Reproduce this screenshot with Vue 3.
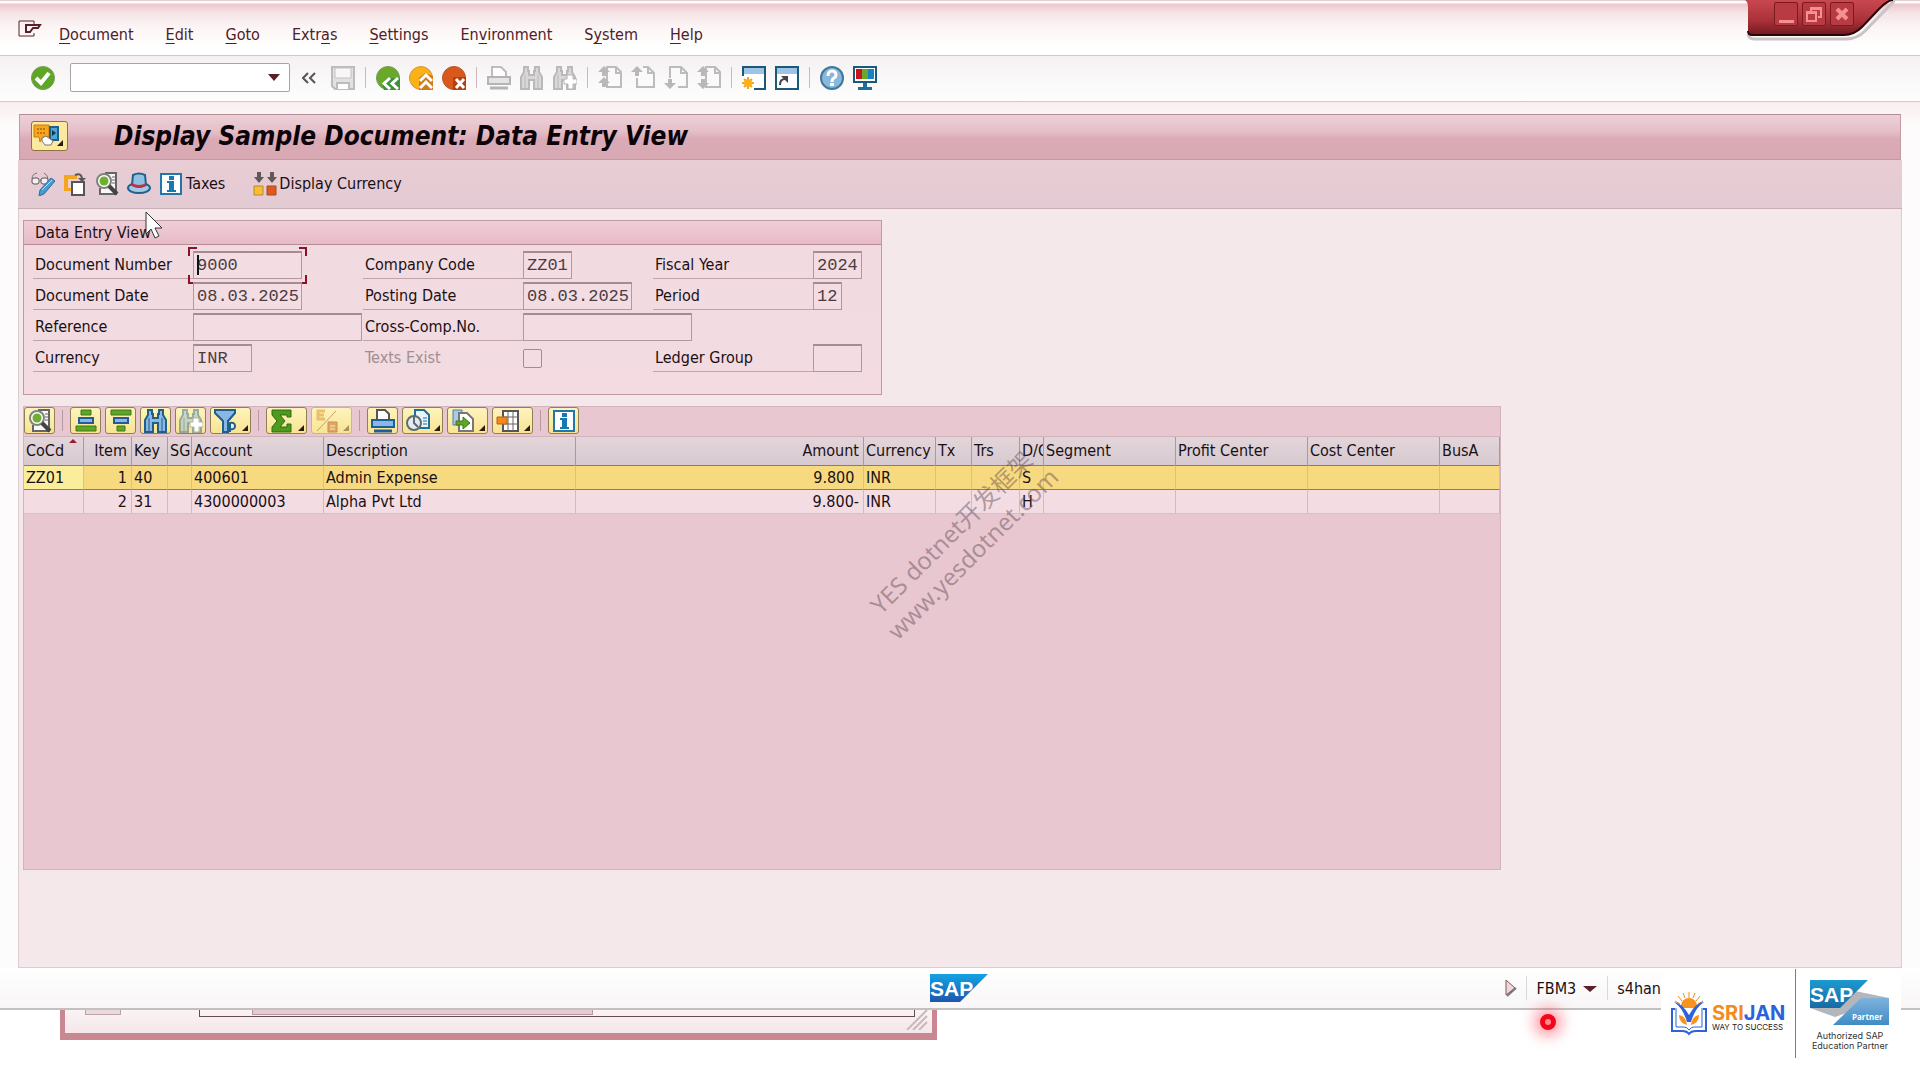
<script setup>
const menus = [
  ['', 'D', 'ocument'],
  ['', 'E', 'dit'],
  ['', 'G', 'oto'],
  ['Extr', 'a', 's'],
  ['', 'S', 'ettings'],
  ['En', 'v', 'ironment'],
  ['S', 'y', 'stem'],
  ['', 'H', 'elp'],
]

const page = (x) =>
  `<path d="M${x} 1h9l5 5v15H${x}z" fill="#fbfafa" stroke="#bdbbbb" stroke-width="2"/><path d="M${x + 9} 1v6h5" fill="none" stroke="#bdbbbb" stroke-width="2"/>`
const upArrow = (y) => `<path d="M6 ${y}l6 6H8v4H4v-4H0z" fill="#b9b7b7"/>`
const downArrow = (y) => `<path d="M6 ${y + 10}l6-6H8v-4H4v4H0z" fill="#b9b7b7"/>`
const binoculars = (fill, stroke) =>
  `<path d="M4 1h4v4h1v4h5V5h1V1h4v5l3 5v12h-8v-9H9v9H1V11l3-5z" fill="${fill}" stroke="${stroke}" stroke-width="2"/><path d="M5 9v13M18 9v13" stroke="${stroke}" stroke-width="1"/>`

const icons = {
  check:
    '<circle cx="12" cy="12" r="11.5" fill="#5fa624" stroke="#7a9a66"/><path d="M5 12l5 5 8-10" fill="none" stroke="#fff" stroke-width="4"/>',
  save:
    '<path d="M1 1h22v22H4l-3-3z" fill="#e2e1e1" stroke="#bdbbbb" stroke-width="2"/><path d="M4 2h16v10H4z" fill="#f8f7f7" stroke="#c4c2c2"/><path d="M6 23v-6h12v6" fill="#fff" stroke="#bdbbbb" stroke-width="2"/>',
  back:
    '<circle cx="12" cy="12" r="11.5" fill="#6aa82a" stroke="#6f9c56"/><path d="M24 12v12H8l-2-6 5-6z" fill="#3f8f3c"/><path d="M14 12l-6 5.5 6 5.5M22 12l-6 5.5 6 5.5" fill="none" stroke="#fff" stroke-width="3"/>',
  exit:
    '<circle cx="12" cy="12" r="11.5" fill="#fbb117" stroke="#cf9a3c"/><path d="M24 10v14H10V12l6-5z" fill="#cf7d15"/><path d="M11 15l6-6 6 6M11 22l6-6 6 6" fill="none" stroke="#fff" stroke-width="3"/>',
  cancel:
    '<circle cx="12" cy="12" r="11.5" fill="#d9581b" stroke="#b0552f"/><path d="M24 11v13H11V11z" fill="#b24210"/><path d="M14 13l8 9M22 13l-8 9" stroke="#fff" stroke-width="3"/>',
  printGray:
    '<path d="M5 10V1h9l5 5v4" fill="#fdfdfd" stroke="#bdbbbb" stroke-width="2"/><path d="M1 11h22v7H1z" fill="#e6e5e5" stroke="#b5b3b3" stroke-width="2"/><path d="M3 22h18" stroke="#b5b3b3" stroke-width="3"/>',
  findGray: binoculars('#d9d8d8', '#bab8b8'),
  findNextGray:
    binoculars('#d9d8d8', '#bab8b8') +
    '<path d="M14 9h6v4h4v5h-4v5h-5v-5h-4v-5h3z" fill="#fff" stroke="#b4b2b2"/>',
  firstPage: page(9) + upArrow(0) + upArrow(11),
  prevPage:
    '<path d="M6 12v9h17V7l-6-6h-5" fill="#fbfafa" stroke="#bdbbbb" stroke-width="2"/><path d="M17 1v6h6" fill="none" stroke="#bdbbbb" stroke-width="2"/>' +
    upArrow(0),
  nextPage:
    '<path d="M6 12V1h11l6 6v14h-9" fill="#fbfafa" stroke="#bdbbbb" stroke-width="2"/><path d="M17 1v6h6" fill="none" stroke="#bdbbbb" stroke-width="2"/>' +
    downArrow(13),
  lastPage: page(9) + upArrow(0) + downArrow(13),
  newSession:
    '<path d="M1 1h22v22H1z" fill="#fff" stroke="#1c5878" stroke-width="2"/><path d="M2 2h20v6H2z" fill="#9fc3e6"/><path d="M0 10h12v14H0z" fill="#fff"/><path d="M6 11v12M0 17h12M2 13l8 8M10 13l-8 8" stroke="#f0a51c" stroke-width="2"/><circle cx="6" cy="17" r="4" fill="#fbb117"/>',
  shortcut:
    '<path d="M1 1h22v22H1z" fill="#fff" stroke="#1c5878" stroke-width="2"/><path d="M2 2h20v6H2z" fill="#9fc3e6"/><path d="M5 19q0-6 5-6" fill="none" stroke="#444" stroke-width="2"/><path d="M6 10h7v7z" fill="#444"/>',
  help:
    '<circle cx="12" cy="12" r="11" fill="#8ab8dd" stroke="#40779c" stroke-width="2"/><path d="M8 10q0-5 4-5t4 4q0 2-2 3t-2 4" fill="none" stroke="#fff" stroke-width="3"/><path d="M10 17h4v3h-4z" fill="#fff"/>',
  monitor:
    '<path d="M1 1h22v15H1z" fill="#fff" stroke="#1c5878" stroke-width="2"/><path d="M3 3h6v10H3z" fill="#c8141c"/><path d="M9 3h6v10H9z" fill="#6aa82a"/><path d="M15 3h6v10h-6z" fill="#1583c4"/><path d="M10 17h4v4h5v3H5v-3h5z" fill="#1c6f9c"/>',
  glasses:
    '<path d="M1 7q0-5 5-6M9 8h3M17 7q0-4-4-6" fill="none" stroke="#777"/><rect x="1" y="6" width="7" height="6" rx="2" fill="#f6eef0" stroke="#555"/><rect x="10" y="6" width="7" height="6" rx="2" fill="#f6eef0" stroke="#555"/><path d="M20 6l4 3-11 13-5 2 1-6z" fill="#4a9ccf" stroke="#2a6f9c"/><path d="M11 18l10-10" stroke="#bfe0f4"/>',
  otherDoc:
    '<path d="M1 3h13v16H1z" fill="#f3a51f"/><path d="M5 7h9v9H5z" fill="#ecd0d6"/><path d="M9 10h12v13H9z" fill="#fff" stroke="#555" stroke-width="2"/><path d="M12 3q7-3 7 5" fill="none" stroke="#555" stroke-width="2"/><path d="M15 6h8l-4 4z" fill="#555"/>',
  detail:
    '<path d="M10 1h11v21H5v-6" fill="#fbf6f7" stroke="#666" stroke-width="2"/><path d="M17 5h3M17 8h3M17 11h3M5 22h12" stroke="#666"/><circle cx="9" cy="9" r="7" fill="#fff" stroke="#7d857d" stroke-width="2"/><circle cx="9" cy="9" r="4.5" fill="#6fae31"/><path d="M14 14l8 8" stroke="#444" stroke-width="4"/>',
  hat:
    '<ellipse cx="12" cy="16" rx="11" ry="5" fill="#9fcbea" stroke="#23618a" stroke-width="2"/><path d="M6 3q6-3 12 0l1 10q-7 4-14 0z" fill="#8fc1e4" stroke="#23618a" stroke-width="2"/><path d="M5 11q7 4 14 0v3q-7 4-14 0z" fill="#c7323a"/>',
  info:
    '<path d="M2 2h20v20H2z" fill="#fff" stroke="#2277a8" stroke-width="2"/><path d="M10 4h5v4h-5zM8 9h7v9h2v2H8v-2h2v-7H8z" fill="#1878b0"/>',
  currency:
    '<path d="M4 0h4v5h3L6 11 1 5h3zM17 0h4v5h3l-5 6-5-6h3z" fill="#5e5a5b"/><path d="M1 14h9v9H1z" fill="#fbbd2e" stroke="#b58a3a"/><path d="M14 14h9v9h-9z" fill="#dc5a1c" stroke="#a54a22"/>',
  services:
    '<path d="M1 1h15v12h-6l-3 5-1-5H1z" fill="#f9a51e" stroke="#c57c14"/><path d="M4 5h9M4 9h9" stroke="#7d4a10" stroke-dasharray="2 1"/><path d="M17 3h8v13h-8z" fill="#4fa6d6" stroke="#1f5f88" stroke-width="2"/><path d="M19 6l4 3-4 3z" fill="#10364f"/><path d="M9 14l4-2 7 5-2 4h-6l-3-4z" fill="#fff" stroke="#777"/>',
  sortAsc:
    '<path d="M7 1h10v5H7z" fill="#5fa624" stroke="#41761a"/><path d="M5 9h14v5H5z" fill="#8ab8e6" stroke="#1f5f98" stroke-width="2"/><path d="M2 17h20v5H2z" fill="#5fa624" stroke="#41761a"/>',
  sortDesc:
    '<path d="M2 1h20v5H2z" fill="#5fa624" stroke="#41761a"/><path d="M5 9h14v5H5z" fill="#8ab8e6" stroke="#1f5f98" stroke-width="2"/><path d="M8 17h8v5H8z" fill="#5fa624" stroke="#41761a"/>',
  find: binoculars('#8ab8e6', '#1f5f88'),
  findNext:
    '<g opacity="0.45">' +
    binoculars('#8ab8e6', '#1f5f88') +
    '</g><path d="M14 9h6v4h4v5h-4v5h-5v-5h-4v-5h3z" fill="#fff" stroke="#b9b39a"/>',
  filter:
    '<path d="M1 1h20v3l-7 8v11H9V12L1 4z" fill="#8ab8e6" stroke="#1f5f88" stroke-width="2"/><path d="M16 23v-9q5-1 5 3t-5 3" fill="#dff0fa" stroke="#1f5f88" stroke-width="2"/>',
  sum:
    '<path d="M2 1h19v7h-4V6h-7l5 6-5 6h7v-3h4v8H2v-5l5-6-5-6z" fill="#4d9a1c" stroke="#2f6a12"/>',
  subtotal:
    '<g opacity="0.6"><path d="M2 22L21 2" stroke="#a06a4a"/><path d="M10 2H3v8h7M4 6h5" fill="none" stroke="#e0a040" stroke-width="3"/><path d="M13 13h9v10h-9z" fill="#d4793e" stroke="#a0582a"/><path d="M15 17h5M15 20h5" stroke="#fff0c0"/></g>',
  print:
    '<path d="M6 11V1h8l4 4v6" fill="#fff" stroke="#555" stroke-width="2"/><path d="M1 11h22v7H1z" fill="#8ab8e6" stroke="#1f5f98" stroke-width="2"/><path d="M3 22h18" stroke="#1f5f98" stroke-width="3"/>',
  views:
    '<path d="M9 1h9l5 5v13H9z" fill="#e9f4fa" stroke="#1f6f98" stroke-width="2"/><path d="M17 9h4M17 12h4M17 15h4" stroke="#1f6f98"/><circle cx="8" cy="14" r="7" fill="#e4ecef" stroke="#5d6b72" stroke-width="2"/><path d="M8 7v7l4 4" fill="none" stroke="#5d6b72" stroke-width="2"/>',
  exportDoc:
    '<path d="M2 1h9v15H2z" fill="#a9cbe6" stroke="#4f7f9e"/><path d="M8 4h8l6 6v12H8z" fill="#fff" stroke="#777" stroke-width="2"/><path d="M5 12h7V8l7 6-7 6v-4H5z" fill="#5fa624" stroke="#41761a"/>',
  layout:
    '<path d="M7 2h15v20H7z" fill="#fff" stroke="#555" stroke-width="2"/><path d="M7 8h15M7 15h15M12 2v20M17 2v20" stroke="#666"/><path d="M1 8h10v7H1z" fill="#f38a1f" stroke="#b9600f"/>',
}

const toolbar = [
  ['save', 'Save'], null,
  ['back', 'Back'], ['exit', 'Exit'], ['cancel', 'Cancel'], null,
  ['printGray', 'Print'], ['findGray', 'Find'], ['findNextGray', 'Find next'], null,
  ['firstPage', 'First page'], ['prevPage', 'Previous page'], ['nextPage', 'Next page'], ['lastPage', 'Last page'], null,
  ['newSession', 'Create session'], ['shortcut', 'Create shortcut'], null,
  ['help', 'Help'], ['monitor', 'Customize local layout'],
]

const gridTools = [
  ['detail', 'Details'], null,
  ['sortAsc', 'Sort ascending'], ['sortDesc', 'Sort descending'], ['find', 'Find'], ['findNext', 'Find next'],
  ['filter', 'Filter', true], null,
  ['sum', 'Total', true], ['subtotal', 'Subtotals', true], null,
  ['print', 'Print'], ['views', 'Views', true], ['exportDoc', 'Export', true], ['layout', 'Layout', true], null,
  ['info', 'Information'],
]

const fields = [
  { id: 'docno', label: 'Document Number', value: '9000', size: 'date', focus: true },
  { id: 'cocode', label: 'Company Code', value: 'ZZ01', size: 'four' },
  { id: 'year', label: 'Fiscal Year', value: '2024', size: 'four' },
  { id: 'docdate', label: 'Document Date', value: '08.03.2025', size: 'date' },
  { id: 'postdate', label: 'Posting Date', value: '08.03.2025', size: 'date' },
  { id: 'period', label: 'Period', value: '12', size: 'two' },
  { id: 'ref', label: 'Reference', value: '', size: 'long' },
  { id: 'cross', label: 'Cross-Comp.No.', value: '', size: 'long' },
  null,
  { id: 'curr', label: 'Currency', value: 'INR', size: 'five' },
  { id: 'texts', label: 'Texts Exist', check: true },
  { id: 'ledger', label: 'Ledger Group', value: '', size: 'four' },
]

const columns = [
  { name: 'CoCd', width: 60, sorted: true },
  { name: 'Item', width: 48, right: true },
  { name: 'Key', width: 36 },
  { name: 'SG', width: 24 },
  { name: 'Account', width: 132 },
  { name: 'Description', width: 252 },
  { name: 'Amount', width: 288, right: true },
  { name: 'Currency', width: 72 },
  { name: 'Tx', width: 36 },
  { name: 'Trs', width: 48 },
  { name: 'D/C', width: 24 },
  { name: 'Segment', width: 132 },
  { name: 'Profit Center', width: 132 },
  { name: 'Cost Center', width: 132 },
  { name: 'BusA', width: 60 },
]

const rows = [
  ['ZZ01', '1', '40', '', '400601', 'Admin Expense', '9.800\u00a0', 'INR', '', '', 'S', '', '', '', ''],
  ['', '2', '31', '', '4300000003', 'Alpha Pvt Ltd', '9.800-', 'INR', '', '', 'H', '', '', '', ''],
]
</script>

<template>
  <div class="screen">
    <main class="window">
      <header class="menubar">
        <button class="plain" aria-label="Window menu">
          <svg width="24" height="32" viewBox="0 0 24 32" fill="none" stroke="#5a1f2a" stroke-width="1">
            <path d="M16 6V2H1v15h15v-3" />
            <path d="M8 6h14l-2 3h-5l-3 4H8z" stroke-width="2" />
          </svg>
        </button>
        <nav class="menus">
          <a v-for="m in menus" :key="m.join('')" href="#">{{ m[0] }}<u>{{ m[1] }}</u>{{ m[2] }}</a>
        </nav>
      </header>

      <div class="controls">
        <svg class="controls-shape" width="150" height="44" viewBox="0 0 150 44">
          <defs>
            <linearGradient id="ctl" x1="0" y1="0" x2="0" y2="1">
              <stop offset="0" stop-color="#c94850" />
              <stop offset="0.6" stop-color="#a93038" />
              <stop offset="1" stop-color="#6e1a20" />
            </linearGradient>
          </defs>
          <path d="M3 34q1 5 6 5h92q11 0 19-8l30-31" fill="none" stroke="#c9c4c6" stroke-width="3" />
          <path d="M0 0q3 2 3 7v24q0 4 4 4h92q10 0 18-8l17-18q9-9 14-9z" fill="url(#ctl)" />
          <path d="M3 31q0 4 4 4h92q10 0 18-8l17-18q9-9 14-9" fill="none" stroke="#2a0508" stroke-width="2" />
        </svg>
        <button aria-label="Minimize"><svg width="22" height="22" viewBox="0 0 22 22"><path d="M4 17h15v3H4z" fill="#f58f92" /></svg></button>
        <button aria-label="Restore"><svg width="22" height="22" viewBox="0 0 22 22" fill="none" stroke="#f58f92" stroke-width="2"><path d="M8 9V5h10v9h-3" /><path d="M4 9h9v9H4z" /><path d="M4 10h9M8 6h10" /></svg></button>
        <button aria-label="Close"><svg width="22" height="22" viewBox="0 0 22 22"><path d="M6 6l10 10M16 6L6 16" stroke="#f58f92" stroke-width="4" /></svg></button>
      </div>

      <div class="toolbar">
        <button class="plain" aria-label="Enter"><svg class="icon" viewBox="0 0 24 24" v-html="icons.check" /></button>
        <div class="command">
          <input type="text" aria-label="Command field" />
          <button class="plain" aria-label="Command history">
            <svg width="14" height="8" viewBox="0 0 14 8"><path d="M1 0h12L7 7z" fill="#5a1f2a" /></svg>
          </button>
        </div>
        <button class="plain collapse" aria-label="Collapse command field">
          <svg width="14" height="12" viewBox="0 0 14 12"><path d="M6 1L1 6l5 5M13 1L8 6l5 5" fill="none" stroke="#555" stroke-width="2" /></svg>
        </button>
        <template v-for="(t, i) in toolbar" :key="i">
          <button v-if="t" class="plain" :aria-label="t[1]"><svg class="icon" viewBox="0 0 24 24" v-html="icons[t[0]]" /></button>
          <span v-else class="sep"></span>
        </template>
      </div>

      <div class="work">
        <section class="panel">
          <div class="title">
            <button class="services" aria-label="Services for object">
              <svg width="28" height="24" viewBox="0 0 28 24" v-html="icons.services" />
              <i class="corner"></i>
            </button>
            <h1>Display Sample Document: Data Entry View</h1>
          </div>
          <div class="actions">
            <button class="plain" aria-label="Display/Change"><svg class="icon" viewBox="0 0 24 24" v-html="icons.glasses" /></button>
            <button class="plain" aria-label="Other document"><svg class="icon" viewBox="0 0 24 24" v-html="icons.otherDoc" /></button>
            <button class="plain" aria-label="Select individual object"><svg class="icon" viewBox="0 0 24 24" v-html="icons.detail" /></button>
            <button class="plain" aria-label="Document header"><svg class="icon" viewBox="0 0 24 24" v-html="icons.hat" /></button>
            <button class="plain labelled taxes"><svg class="icon" viewBox="0 0 24 24" v-html="icons.info" />Taxes</button>
            <button class="plain labelled"><svg class="icon" viewBox="0 0 24 24" v-html="icons.currency" />Display Currency</button>
          </div>

          <div class="content">
            <section class="group">
              <h2>Data Entry View</h2>
              <form class="fields">
                <template v-for="(f, i) in fields" :key="i">
                  <template v-if="f && f.check">
                    <label class="dim" :for="f.id">{{ f.label }}</label>
                    <div class="cell"><input :id="f.id" type="checkbox" disabled /></div>
                  </template>
                  <template v-else-if="f">
                    <label :for="f.id">{{ f.label }}</label>
                    <div class="cell">
                      <span class="holder" :class="f.size">
                        <input :id="f.id" type="text" :value="f.value" readonly />
                        <template v-if="f.focus">
                          <svg class="brackets" width="120" height="37" viewBox="0 0 120 37" fill="none" stroke="#8c1027" stroke-width="2">
                            <path d="M1 9V1h8M111 1h7v8M118 28v8h-7M9 36H1v-8" />
                          </svg>
                          <i class="caret"></i>
                        </template>
                      </span>
                    </div>
                  </template>
                  <template v-else><span></span><span></span></template>
                </template>
              </form>
            </section>

            <section class="grid">
              <div class="gridtools">
                <template v-for="(t, i) in gridTools" :key="i">
                  <button v-if="t" class="tool" :class="{ wide: t[2], off: t[0] === 'subtotal' }" :aria-label="t[1]">
                    <svg class="icon" viewBox="0 0 24 24" v-html="icons[t[0]]" />
                    <i v-if="t[2]" class="corner"></i>
                  </button>
                  <span v-else class="sep"></span>
                </template>
              </div>
              <table>
                <colgroup>
                  <col v-for="c in columns" :key="c.name" :style="{ width: c.width + 'px' }" />
                </colgroup>
                <thead>
                  <tr>
                    <th v-for="c in columns" :key="c.name" :class="{ right: c.right }">
                      {{ c.name }}<i v-if="c.sorted" class="sorted"></i>
                    </th>
                  </tr>
                </thead>
                <tbody>
                  <tr v-for="(r, i) in rows" :key="i" :class="{ selected: i === 0 }">
                    <td v-for="(v, j) in r" :key="j" :class="{ right: columns[j].right }">{{ v }}</td>
                  </tr>
                </tbody>
              </table>
            </section>
          </div>
        </section>
      </div>

      <footer class="status">
        <svg class="sap" width="58" height="28" viewBox="0 0 58 28">
          <defs>
            <linearGradient id="sapblue" x1="0" y1="0" x2="0" y2="1">
              <stop offset="0" stop-color="#12a4e4" />
              <stop offset="1" stop-color="#1f55ae" />
            </linearGradient>
          </defs>
          <path d="M0 0h58L30 28H0z" fill="url(#sapblue)" />
          <text x="0" y="22" class="saptext">SAP</text>
        </svg>
        <div class="session">
          <button class="plain" aria-label="Expand status bar">
            <svg width="12" height="18" viewBox="0 0 12 18"><path d="M1 1l9 8-9 7z" fill="#ead8dc" stroke="#855" /><path d="M2 17l9-8" stroke="#777" stroke-width="2" /></svg>
          </button>
          <button class="plain code">FBM3 <svg width="14" height="8" viewBox="0 0 14 8"><path d="M0 1h14L7 7z" fill="#5a1f2a" /></svg></button>
          <span class="server">s4han</span>
        </div>
      </footer>
    </main>

    <div class="behind">
      <div class="behind-window">
        <div class="behind-button"></div>
        <div class="behind-pane"><div class="behind-scroll"></div></div>
        <svg class="grip" width="22" height="20" viewBox="0 0 22 20" stroke="#cbb9b9" stroke-width="2"><path d="M1 20L21 0M7 20L21 6M13 20l8-8" /></svg>
      </div>
    </div>

    <aside class="brand">
      <div class="srijan">
        <svg width="36" height="46" viewBox="0 0 36 46">
          <g stroke="#f28c1c" stroke-width="1"><path d="M18 1v6M12 2l2 5M24 2l-2 5M7 5l4 5M29 5l-4 5M4 10l5 3M32 10l-5 3" /></g>
          <path d="M10 15a8 8 0 0 1 16 0l-8 9z" fill="#f7931e" />
          <path d="M4 18H1v22h10q5 0 7 3 2-3 7-3h10V18h-3" fill="none" stroke="#2f62d8" stroke-width="2" />
          <path d="M5 17v19h8q3 0 5 3 2-3 5-3h8V17" fill="#fff" stroke="#2f62d8" stroke-width="1" />
          <path d="M3 11q8 1 15 13Q25 11 33 11q-9 6-13 20h-4Q12 17 3 11z" fill="#2f62d8" />
          <path d="M8 24q7 1 8 10-8-2-8-10zM28 24q-7 1-8 10 8-2 8-10z" fill="#f7931e" />
        </svg>
        <div>
          <strong><span>SRI</span>JAN</strong>
          <small>WAY TO SUCCESS</small>
        </div>
      </div>
      <div class="partner">
        <svg width="80" height="48" viewBox="0 0 80 48">
          <defs>
            <linearGradient id="p1" x1="0" y1="0" x2="0" y2="1">
              <stop offset="0" stop-color="#1c9ad0" />
              <stop offset="1" stop-color="#1a6aa4" />
            </linearGradient>
            <linearGradient id="p2" x1="0" y1="0" x2="0" y2="1">
              <stop offset="0" stop-color="#7fb2dc" />
              <stop offset="1" stop-color="#3f8cc4" />
            </linearGradient>
          </defs>
          <path d="M0 29L45 12l34 7-54 19z" fill="#b3b6ba" />
          <path d="M0 1h58L30 29H0z" fill="url(#p1)" />
          <path d="M51 19h28v27H23z" fill="url(#p2)" />
          <text x="0" y="23" class="saptext">SAP</text>
          <text x="42" y="41" class="partnertext">Partner</text>
        </svg>
        <p>Authorized SAP<br />Education Partner</p>
      </div>
    </aside>

    <i class="laser"></i>
    <svg class="cursor" width="18" height="28" viewBox="0 0 18 28"><path d="M1 1v22l5-5 4 9 4-2-4-8h7z" fill="#fff" stroke="#333" /></svg>
    <div class="watermark">YES dotnet开发框架<br />www.yesdotnet.com</div>
  </div>
</template>

<style>
body {
  margin: 0;
  background: #fff;
}
</style>

<style scoped>
.screen {
  position: relative;
  display: flex;
  flex-direction: column;
  min-height: 100vh;
  overflow: hidden;
  font-family: 'DejaVu Sans Condensed', 'DejaVu Sans', 'Noto Sans', sans-serif;
  font-size: 16px;
  line-height: 20px;
  color: #1a1014;
}
.screen * {
  box-sizing: border-box;
}
svg {
  display: block;
  flex: none;
}
button {
  font: inherit;
  color: inherit;
  padding: 0;
}
.plain {
  border: 0;
  background: none;
}
.icon {
  width: 24px;
  height: 24px;
}
.sep {
  width: 1px;
  height: 21px;
  margin: 0 1px;
  background: #d3b6bc;
}
.window {
  position: relative;
  flex: 1;
  display: flex;
  flex-direction: column;
  background: #fdfcfc;
  border-bottom: 2px solid #c4bfc1;
}

.menubar {
  display: flex;
  align-items: center;
  height: 56px;
  padding: 14px 18px 0;
  gap: 17px;
  border-top: 1px solid #e3cdd2;
  border-bottom: 1px solid #cfcbcc;
  background: linear-gradient(#fff 0, #fff 2px, #eac6cd 3px, #f5e4e6 12px, #fcf5f5 26px, #fff 46px);
}
.menus {
  display: flex;
  gap: 32px;
}
.menus a {
  color: #4f2029;
  text-decoration: none;
}
.menus u {
  text-underline-offset: 3px;
}
.controls {
  position: absolute;
  top: 0;
  right: 25px;
  width: 150px;
  display: flex;
  gap: 4px;
  padding: 2px 0 0 29px;
}
.controls-shape {
  position: absolute;
  top: 0;
  left: 0;
}
.controls button {
  position: relative;
  width: 24px;
  height: 24px;
  border: 1px solid #7c1a20;
  border-radius: 2px;
  background: #b83a42;
}

.toolbar {
  display: flex;
  align-items: center;
  gap: 9px;
  height: 46px;
  padding: 0 31px 2px;
  background: linear-gradient(#f5f1f2, #fefefe);
  border-bottom: 1px solid #cfcbcc;
}
.command {
  display: flex;
  align-items: center;
  width: 220px;
  height: 29px;
  margin-left: 6px;
  padding-right: 8px;
  border: 1px solid #a9a3a5;
  border-radius: 2px;
  background: #fff;
}
.command input {
  flex: 1;
  min-width: 0;
  border: 0;
  outline: 0;
  background: none;
}
.collapse {
  margin: 0 6px 0 3px;
}

.work {
  flex: 1;
  display: flex;
  padding: 12px 18px 0;
  background: linear-gradient(#f9eeef, #fdfbfb 24px, #fdfcfc);
}
.panel {
  flex: 1;
  min-width: 0;
  display: flex;
  flex-direction: column;
}
.title {
  display: flex;
  align-items: center;
  gap: 46px;
  height: 46px;
  padding: 0 11px 2px;
  margin: 0 1px;
  border: 1px solid #c39aa4;
  border-top-color: #b38e97;
  background: linear-gradient(#edd0d7, #e6c0ca 35%, #daabb6 55%, #d8a9b3);
}
h1 {
  margin: 0;
  font-size: 26px;
  line-height: 32px;
  font-style: italic;
  font-weight: bold;
  color: #0c0408;
}
.services {
  position: relative;
  width: 37px;
  height: 30px;
  padding: 2px 1px;
  border: 1px solid #92723f;
  border-radius: 3px;
  background: #fbe9a0;
}
.corner {
  position: absolute;
  right: 4px;
  bottom: 4px;
  border: 3px solid transparent;
  border-right-color: #2a1c08;
  border-bottom-color: #2a1c08;
}
.actions {
  display: flex;
  align-items: center;
  gap: 8px;
  height: 49px;
  padding: 0 13px;
  border-bottom: 1px solid #c9b0b7;
  background: linear-gradient(#e9ccd4, #e3cbd3);
}
.labelled {
  display: flex;
  align-items: center;
  gap: 2px;
}
.taxes {
  gap: 3px;
  margin-right: 20px;
}
.content {
  flex: 1;
  display: flex;
  flex-direction: column;
  align-items: flex-start;
  gap: 11px;
  padding: 11px 4px 24px;
  border: 1px solid #dccbd0;
  border-top: 0;
  background: #f4e8eb;
}

.group {
  width: 859px;
  max-width: 100%;
  border: 1px solid #bf9aa4;
  background: linear-gradient(#f9d8de, #f2dbe0 20px, #f3dbe1);
}
h2 {
  margin: 0;
  height: 24px;
  padding: 1px 11px;
  font-size: 16px;
  font-weight: normal;
  line-height: 22px;
  border-bottom: 1px solid #b98a98;
  background: linear-gradient(#f0cdd7, #e7bbc8);
}
.fields {
  display: grid;
  grid-template-columns: 160px 170px 160px 130px 160px auto;
  grid-auto-rows: 28px;
  row-gap: 3px;
  padding: 6px 0 22px 9px;
}
label {
  padding: 1px 0 0 2px;
  line-height: 26px;
  border-bottom: 1px solid #c2a3ab;
}
label.dim {
  color: #9f8e93;
  border-color: transparent;
}
.cell {
  display: flex;
  align-items: center;
}
.holder {
  position: relative;
  flex: none;
  width: 169px;
  height: 28px;
}
.holder.date {
  width: 109px;
}
.holder.four {
  width: 49px;
}
.holder.two {
  width: 29px;
}
.holder.five {
  width: 59px;
}
.holder input {
  width: 100%;
  height: 100%;
  padding: 0 0 1px 3px;
  border: 1px solid #b3999f;
  border-top: 2px solid #a58c92;
  border-radius: 0;
  outline: 0;
  background: #f3dde3;
  font-family: 'Liberation Mono', monospace;
  font-size: 17px;
  color: #4a3c42;
}
.brackets {
  position: absolute;
  top: -4px;
  left: -5px;
}
.caret {
  position: absolute;
  top: 4px;
  left: 4px;
  width: 2px;
  height: 20px;
  background: #111;
}
.cell input[type='checkbox'] {
  appearance: none;
  width: 19px;
  height: 19px;
  margin: 0;
  border: 1px solid #a58c92;
  border-radius: 2px;
  background: #f3dde3;
}

.grid {
  width: 1478px;
  max-width: 100%;
  min-height: 464px;
  border: 1px solid #d3b4bc;
  background: #e8c7d0;
}
.gridtools {
  display: flex;
  align-items: center;
  gap: 4px;
  height: 30px;
  padding-bottom: 2px;
  border-bottom: 1px solid #d0b4bb;
}
.gridtools .sep {
  margin: 0 3px;
  background: #b59aa2;
}
.tool {
  position: relative;
  width: 31px;
  height: 27px;
  padding: 0 3px;
  border: 1px solid #8f8058;
  border-radius: 3px;
  background: linear-gradient(#fdf3bd, #f9e492);
}
.tool.wide {
  width: 41px;
}
.tool .corner {
  right: 2px;
  bottom: 2px;
}
.tool.off {
  border-color: #c9b68c;
}
.tool.off .corner {
  opacity: 0.4;
}
table {
  width: 100%;
  table-layout: fixed;
  border-collapse: separate;
  border-spacing: 0;
}
th,
td {
  padding: 0 2px;
  overflow: hidden;
  white-space: nowrap;
  text-align: left;
  font-weight: normal;
}
th {
  position: relative;
  height: 28px;
  border-right: 1px solid #a79ba0;
  background: linear-gradient(#e3d5da, #d6cad0);
}
td {
  height: 24px;
  border-right: 1px solid #d3b9c0;
  border-bottom: 1px solid #d8bfc5;
  background: #f4dce3;
  color: #1a1014;
}
.right {
  padding-right: 4px;
  text-align: right;
}
.selected td {
  height: 25px;
  border-top: 1px solid #b5713a;
  border-bottom-color: #b5713a;
  background: #f7d980;
}
.selected td:first-child {
  background: #faee9c;
}
.sorted {
  position: absolute;
  top: 2px;
  right: 6px;
  border: 4px solid transparent;
  border-top: 0;
  border-bottom-color: #9c1830;
}

.status {
  display: flex;
  align-items: center;
  justify-content: space-between;
  height: 40px;
  padding: 0 259px 0 930px;
  background: linear-gradient(#fff, #f8f6f7);
}
.saptext {
  font: bold 21px 'Liberation Sans', Arial, sans-serif;
  fill: #fff;
}
.session {
  display: flex;
  align-items: center;
  height: 24px;
}
.code {
  display: flex;
  align-items: center;
  gap: 7px;
  height: 24px;
  margin-left: 9px;
  padding: 1px 10px 0;
  border-left: 1px solid #dcd8da;
  border-right: 1px solid #dcd8da;
}
.server {
  padding: 1px 0 0 9px;
}

.behind {
  height: 70px;
  padding-left: 60px;
}
.behind-window {
  position: relative;
  display: flex;
  align-items: flex-start;
  width: 877px;
  height: 30px;
  padding: 0 17px 0 20px;
  border: solid #c98791;
  border-width: 0 5px 7px;
  background: linear-gradient(#fbf3f4, #f5e6e9);
}
.behind-button {
  width: 36px;
  height: 5px;
  border: 1px solid #b8a5aa;
  border-top: 0;
  background: #ecd9dd;
}
.behind-pane {
  flex: 1;
  height: 7px;
  margin-left: 78px;
  padding-left: 52px;
  border: 1px solid #5f4f53;
  border-top: 0;
}
.behind-scroll {
  width: 341px;
  height: 5px;
  border: 1px solid #b9979e;
  border-top: 0;
  background: #e6cbd1;
}
.grip {
  position: absolute;
  right: 4px;
  bottom: 3px;
}

.brand {
  position: absolute;
  right: 19px;
  bottom: 22px;
  width: 240px;
  height: 89px;
  display: flex;
  border-radius: 10px;
  background: #fff;
}
.srijan {
  display: flex;
  align-items: center;
  gap: 5px;
  width: 135px;
  padding-left: 10px;
  border-right: 1px solid #7d7d80;
}
.srijan strong {
  display: block;
  margin-top: 6px;
  font: bold 20px/20px Inter, sans-serif;
  color: #2a62dc;
}
.srijan strong span {
  color: #f28c1c;
}
.srijan small {
  display: block;
  font: 8px/8px Inter, sans-serif;
  color: #222;
}
.partner {
  padding: 10px 0 0 14px;
}
.partner p {
  margin: 4px 0 0;
  width: 80px;
  font: 9px/10px Inter, sans-serif;
  text-align: center;
  white-space: nowrap;
  color: #333;
}
.partnertext {
  font: bold 8px 'Open Sans', sans-serif;
  fill: #fff;
}

.laser {
  position: absolute;
  right: 364px;
  bottom: 50px;
  width: 16px;
  height: 16px;
  border: 5px solid #f2061a;
  border-radius: 50%;
  background: #ff8a8a;
  box-shadow: 0 0 14px 6px rgba(255, 60, 80, 0.5);
}
.cursor {
  position: absolute;
  top: 211px;
  left: 145px;
}
.watermark {
  position: absolute;
  top: 513px;
  left: 842px;
  width: 240px;
  font: 24px/30px 'Noto Sans', 'Noto Sans CJK SC', sans-serif;
  text-align: center;
  white-space: nowrap;
  color: rgba(90, 70, 78, 0.45);
  transform: rotate(-45deg);
  pointer-events: none;
}
</style>
